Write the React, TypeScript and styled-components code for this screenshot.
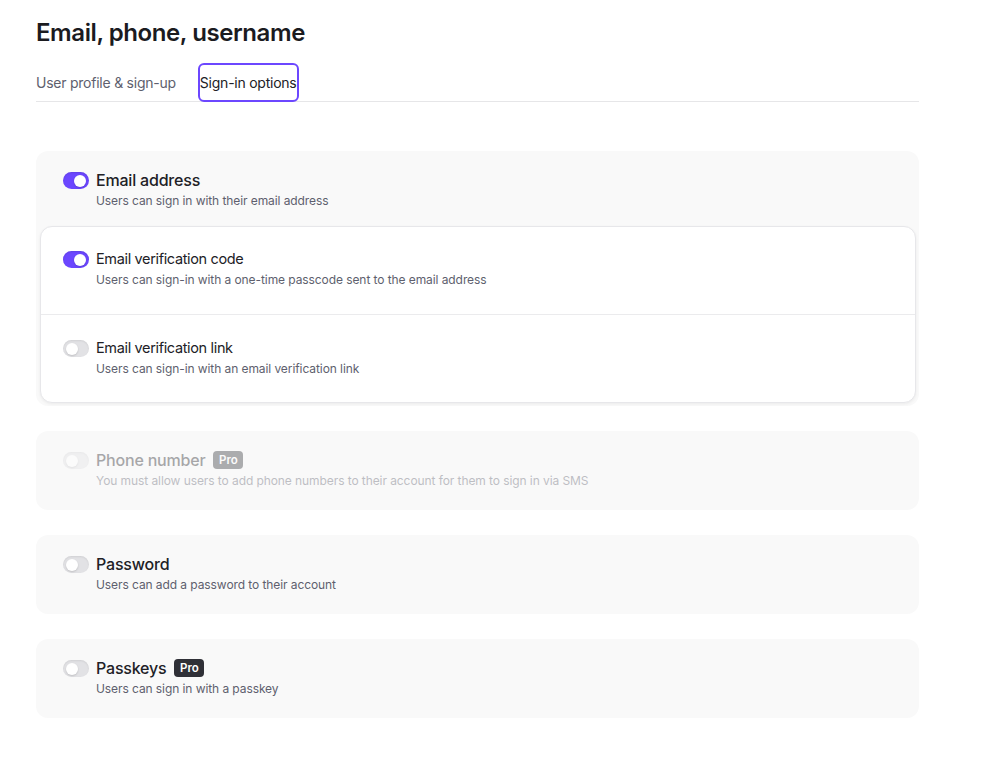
import React from "react";
import styled, { createGlobalStyle } from "styled-components";

const Global = createGlobalStyle`
  html, body { margin: 0; padding: 0; background: #ffffff; }
  body { font-family: Inter, "Noto Sans", sans-serif; color: #212126; -webkit-font-smoothing: antialiased; }
`;

const Page = styled.div`
  width: 883px;
  padding: 18px 0 40px 36px;
`;

const Title = styled.h1`
  margin: 0;
  font-size: 24px;
  line-height: 30px;
  font-weight: 600;
  letter-spacing: -0.42px;
  color: #1b1b1f;
`;

const Tabs = styled.div`
  display: flex;
  align-items: stretch;
  gap: 24px;
  margin-top: 15px;
  border-bottom: 1px solid #e6e6e8;
  height: 38px;
`;

const Tab = styled.button<{ $active?: boolean }>`
  all: unset;
  box-sizing: border-box;
  display: flex;
  align-items: center;
  font-family: Inter, "Noto Sans", sans-serif;
  font-size: 14px;
  letter-spacing: -0.24px;
  color: ${(p) => (p.$active ? "#212126" : "#5e5f6e")};
  padding: 0;
  border: 2px solid ${(p) => (p.$active ? "#6c47ff" : "transparent")};
  border-radius: 6px;
  margin: 0 -2px -1px;
  height: 39px;
`;

const Stack = styled.div`
  display: flex;
  flex-direction: column;
  gap: 25px;
  margin-top: 49px;
`;

const Card = styled.section`
  background: #f9f9f9;
  border-radius: 12px;
  padding: 0 3px 3px 4px;
`;

const Row = styled.div<{ $inner?: boolean; $header?: boolean; $disabled?: boolean }>`
  display: flex;
  align-items: flex-start;
  gap: 7px;
  padding: ${(p) =>
    p.$inner ? "22px 22px 26px 22px" : p.$header ? "19px 23px 17px 23px" : "19px 23px 18px 23px"};
  & > * {
    opacity: ${(p) => (p.$disabled ? 0.38 : 1)};
  }
  & + & {
    border-top: 1px solid #ebebed;
    padding-top: 23px;
    padding-bottom: 25px;
  }
`;

const InnerCard = styled.div`
  background: #ffffff;
  border: 1px solid #e7e7ea;
  border-radius: 12px;
  box-shadow: 0 1px 3px rgba(0, 0, 0, 0.06);
`;

const Toggle = styled.span<{ $on?: boolean }>`
  flex: none;
  position: relative;
  width: 26px;
  height: 17px;
  border-radius: 9px;
  margin-top: 2px;
  box-sizing: border-box;
  background: ${(p) => (p.$on ? "#6c47ff" : "#e2e2e5")};
  box-shadow: inset 0 1px 2px rgba(0, 0, 0, ${(p) => (p.$on ? 0.1 : 0.08)});
  &::after {
    content: "";
    position: absolute;
    top: 2.5px;
    left: ${(p) => (p.$on ? "11px" : "3px")};
    width: 12px;
    height: 12px;
    border-radius: 50%;
    background: #ffffff;
    box-shadow: 0 1px 2px rgba(0, 0, 0, 0.15);
  }
`;

const Text = styled.div`
  display: flex;
  flex-direction: column;
  gap: 3px;
`;

const Label = styled.div<{ $small?: boolean }>`
  display: flex;
  align-items: center;
  gap: 8px;
  font-size: ${(p) => (p.$small ? "14.5px" : "16px")};
  line-height: 20px;
  font-weight: ${(p) => (p.$small ? 400 : 500)};
  letter-spacing: ${(p) => (p.$small ? "-0.35px" : "-0.2px")};
  color: #212126;
`;

const Badge = styled.span`
  display: inline-flex;
  align-items: center;
  justify-content: center;
  width: 30px;
  height: 18px;
  border-radius: 4px;
  font-size: 11.5px;
  font-weight: 600;
  letter-spacing: 0;
  color: #ffffff;
  background: #2f3037;
`;

const Desc = styled.div`
  font-size: 12px;
  line-height: 16px;
  letter-spacing: -0.08px;
  color: #5e5f6e;
`;

type OptionProps = {
  on?: boolean;
  label: string;
  desc: string;
  pro?: boolean;
  inner?: boolean;
  header?: boolean;
  disabled?: boolean;
};

const Option = ({ on, label, desc, pro, inner, header, disabled }: OptionProps) => (
  <Row $inner={inner} $header={header} $disabled={disabled}>
    <Toggle $on={on} />
    <Text>
      <Label $small={inner}>
        {label}
        {pro && <Badge>Pro</Badge>}
      </Label>
      <Desc>{desc}</Desc>
    </Text>
  </Row>
);

export default function App() {
  return (
    <>
      <Global />
      <Page>
        <Title>Email, phone, username</Title>
        <Tabs>
          <Tab>User profile &amp; sign-up</Tab>
          <Tab $active>Sign-in options</Tab>
        </Tabs>
        <Stack>
          <Card>
            <Option header on label="Email address" desc="Users can sign in with their email address" />
            <InnerCard>
              <Option
                inner
                on
                label="Email verification code"
                desc="Users can sign-in with a one-time passcode sent to the email address"
              />
              <Option
                inner
                label="Email verification link"
                desc="Users can sign-in with an email verification link"
              />
            </InnerCard>
          </Card>
          <Card>
            <Option
              disabled
              label="Phone number"
              pro
              desc="You must allow users to add phone numbers to their account for them to sign in via SMS"
            />
          </Card>
          <Card>
            <Option label="Password" desc="Users can add a password to their account" />
          </Card>
          <Card>
            <Option label="Passkeys" pro desc="Users can sign in with a passkey" />
          </Card>
        </Stack>
      </Page>
    </>
  );
}
